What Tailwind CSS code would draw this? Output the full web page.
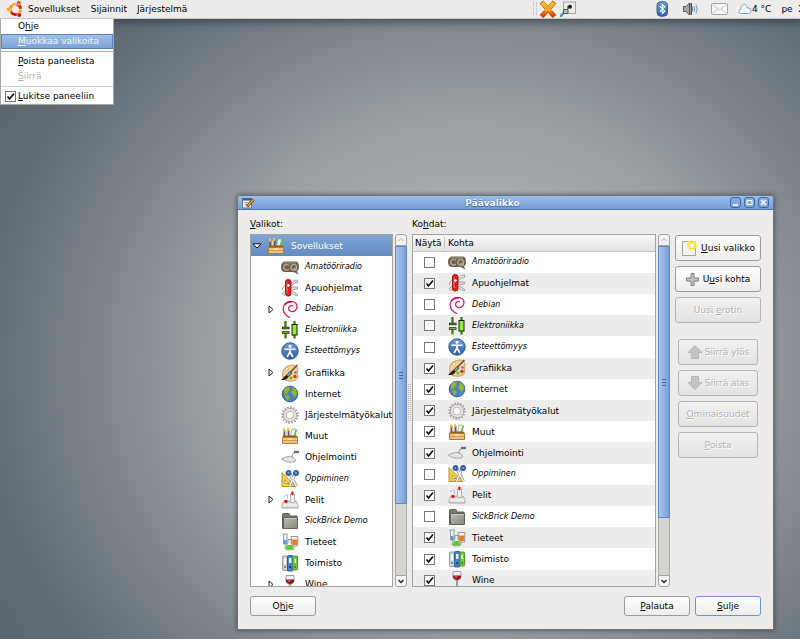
<!DOCTYPE html>
<html lang="fi">
<head>
<meta charset="utf-8">
<title>Päävalikko</title>
<script src="https://cdn.jsdelivr.net/npm/@tailwindcss/browser@4"></script>
</head>
<body class="relative h-screen overflow-hidden bg-[#858d93] bg-[radial-gradient(ellipse_75%_88%_at_59%_57%,#b4b7b9_0%,#a5aaad_32%,#979da1_46%,#80888e_61%,#606b74_82%,#56616a_100%)] font-['DejaVu_Sans',sans-serif] text-[9px] leading-3 text-black">

<!-- icon set -->
<svg class="absolute size-0" aria-hidden="true">
  <defs>
    <linearGradient id="gBlue" x1="0" y1="0" x2="0" y2="1"><stop offset="0" stop-color="#6f9fd8"/><stop offset="1" stop-color="#2c5fa6"/></linearGradient>
    <linearGradient id="gFolder" x1="0" y1="0" x2="1" y2="1"><stop offset="0" stop-color="#b9bcae"/><stop offset="1" stop-color="#85897b"/></linearGradient>
    <linearGradient id="gX" x1="0" y1="0" x2="0" y2="1"><stop offset="0" stop-color="#f9c21b"/><stop offset=".5" stop-color="#f99a1c"/><stop offset="1" stop-color="#e63a0c"/></linearGradient>
  </defs>
  <symbol id="box" viewBox="0 0 18 18">
    <path d="M3.500 3v6M7.500 3v6" stroke="#6b4c86" stroke-width="2"/><path d="M5.500 3.500v6" stroke="#e8dfb0" stroke-width="2"/><path d="M3 1.500v3M7 1v3" stroke="#ecc927" stroke-width="2"/>
    <path d="M9.500 9l1.500-7h3.500l-1 7z" fill="#f2f6f1" stroke="#94ab90" stroke-width=".8"/><path d="M13.500 9l2-6.500" stroke="#67c046" stroke-width="1.600"/>
    <path d="M2.500 8.500h13l1.500 2H1z" fill="#94611f"/><path d="M1.500 10.500h15v6h-15z" fill="#efc183" stroke="#b27c35"/><path d="M2 13.500h14" stroke="#c79350" stroke-width=".8"/><path d="M7 12h4" stroke="#fff3dc"/>
  </symbol>
  <symbol id="cq" viewBox="0 0 18 18">
    <path d="M4 3.500h10c3 0 4 2 4 5 0 2-.5 4-2 5l1.500 3-5-2.500H4c-2.500 0-4-2-4-5s1.500-5.500 4-5.500z" fill="#6e604e"/><path d="M2.500 4.800h12.500" stroke="#a19481" stroke-width="1"/>
    <path d="M7.800 7.500A2.800 2.800 0 1 0 7.800 10.800" fill="none" stroke="#b5a998" stroke-width="1.400"/><circle cx="12.700" cy="9.200" r="2.800" fill="none" stroke="#b5a998" stroke-width="1.400"/><path d="M12.700 10l3 2.500" stroke="#b5a998" stroke-width="1.300"/>
  </symbol>
  <symbol id="knife" viewBox="0 0 18 18">
    <path d="M10 4.500c2-2.500 4-3.500 6.500-3.500v2.500c-2.500 0-4 1-5 3M10.500 8h6v2l-5 .5M11 11.500l6 4.500-1 1-5-2.500M5 6C3 6 2 8 1 11M5 11l-4 3.500 2 2 3-2.500" fill="#e6e7e5" stroke="#9a9c98" stroke-width=".9"/>
    <rect x="4.500" y=".5" width="5.500" height="16.500" rx="2.500" fill="#dd2020" stroke="#a81414"/><path d="M6 3.500v10.500" stroke="#f0827a" stroke-width="1"/><path d="M7.500 5v3M6 6.500h3" stroke="#fff" stroke-width="1.200"/>
  </symbol>
  <symbol id="debian" viewBox="0 0 18 18">
    <path d="M8.500 17.500C4.500 15.500 2 12 2.200 8.200 2.500 4.200 6 1.300 10 1.300c3.600 0 6.200 2.400 6 5.500-.2 3.100-2.700 5.200-5.400 4.700C8.300 11 7.200 9.500 7.700 7.700 8.200 6 9.800 5.200 11.500 5.800" fill="none" stroke="#cb2460" stroke-width="1.300" stroke-linecap="round"/><path d="M3.500 5C5 3 7.500 1.700 11 1.800" fill="none" stroke="#c80f50" stroke-width="1.600"/>
  </symbol>
  <symbol id="electro" viewBox="0 0 18 18">
    <path d="M4.500 0v17.500M13.500 0v17.500" stroke="#4a8020" stroke-width="2.400"/><rect x="1" y="6" width="7.500" height="7" fill="#fff"/><path d="M1 7h7.500M1 11.500h7.500" stroke="#151b10" stroke-width="2.400"/><path d="M1.800 7h6M1.800 11.500h6" stroke="#77b53a" stroke-width="1"/><rect x="11" y="3.500" width="5" height="10.500" fill="#8df032" stroke="#142008"/>
  </symbol>
  <symbol id="access" viewBox="0 0 18 18">
    <circle cx="9" cy="9" r="8.200" fill="url(#gBlue)" stroke="#2a558f"/><circle cx="9" cy="4.300" r="1.500" fill="#fff"/><path d="M4 7.200h10M9 7v4M9 10l-2.600 4.500M9 10l2.600 4.500" stroke="#fff" stroke-width="1.600" stroke-linecap="round"/>
  </symbol>
  <symbol id="palette" viewBox="0 0 18 18">
    <path d="M9 1.500c4-1.500 8 .5 8 4.500 0 2-1 3-.5 5s.5 3.500-1.500 5-7 1.500-10 .5S1 12 2 7.500s4-5 7-6z" fill="#f2d19a" stroke="#b98a48" stroke-width=".8"/><circle cx="6" cy="5" r="1.600" fill="#fff6de" stroke="#c39a58" stroke-width=".6"/><circle cx="14.500" cy="8.500" r="1.300" fill="#4a7fd0"/><circle cx="14" cy="12.500" r="1.700" fill="#de2c1c"/><circle cx="10" cy="14" r="1.500" fill="#4ec22d"/>
    <path d="M16.500 1L7.500 10" stroke="#7d532b" stroke-width="1.700"/><path d="M9 7.500L5.500 11 7.500 13 11 9z" fill="#8b8f8f" stroke="#333" stroke-width=".7"/><path d="M5.500 11C3 12 3 14 0 15.500c3 1.500 6 0 7.500-2.500z" fill="#222"/>
  </symbol>
  <symbol id="globe" viewBox="0 0 18 18">
    <circle cx="9" cy="9" r="7.800" fill="#4b80c4" stroke="#3a6394"/><path d="M3 4.500C5 2 8 1.500 9 2l-1 2 1 1.500-2.500 1L6.500 9 3 8zM11 2.500c3 .5 5 3 5.300 5.500L15 10l-1.500 2.500-1.500-3L10 8l1.500-3zM3.500 9.500l5 1.500L8 14l-1.500 1.500L4.500 12z" fill="#93b640" stroke="#7aa036" stroke-width=".5"/>
  </symbol>
  <symbol id="gear" viewBox="0 0 18 18">
    <circle cx="9" cy="9" r="7.900" fill="none" stroke="#9a9494" stroke-width="1.500" stroke-dasharray="1.600 1.500"/><circle cx="9" cy="9" r="6.600" fill="#eae6e6" stroke="#a39d9d" stroke-width=".9"/><circle cx="9" cy="9" r="3.900" fill="#fff" stroke="#c2a6a6" stroke-width=".9"/>
  </symbol>
  <symbol id="trowel" viewBox="0 0 18 18">
    <path d="M.5 11c3-1.800 7-2.800 9-2.600l2.500.6 3 3.500c-2 2.500-10 2.500-14.500-1.500z" fill="#e4e5e2" stroke="#9a9c98" stroke-width=".9"/><path d="M11 9.500c0-3 .5-4.500 3-5" fill="none" stroke="#9a9c98" stroke-width="1.100"/><path d="M13 4h5" stroke="#6b6d69" stroke-width="2.400"/>
  </symbol>
  <symbol id="edu" viewBox="0 0 18 18">
    <path d="M1 2.500v14h14z" fill="#f0cf4a" stroke="#b38c1a" stroke-width=".9"/><path d="M4 10v3.500h4z" fill="#fff" stroke="#b38c1a" stroke-width=".8"/><path d="M14 4L8.500 16.500M9 4l6.500 12.500" stroke="#8a8c8e" stroke-width="2.800"/><path d="M14 4L8.500 16.500M9 4l6.500 12.500" stroke="#f2f2f2" stroke-width="1.600"/><circle cx="7.500" cy="3" r="2" fill="#7ea3d3" stroke="#2f5f9f" stroke-width="1.900"/><circle cx="15" cy="3" r="2" fill="#7ea3d3" stroke="#2f5f9f" stroke-width="1.900"/>
  </symbol>
  <symbol id="joy" viewBox="0 0 18 18">
    <path d="M3 10h12l2 4v3H1v-3z" fill="#e2e3e1" stroke="#9b9c9a" stroke-width=".9"/><path d="M1.500 14h15" stroke="#fafafa"/><path d="M9.500 3h4v8.500h-4z" fill="#f0f0f0" stroke="#a5a5a5" stroke-width=".8"/><rect x="10.300" y=".5" width="2.200" height="3.700" rx="1" fill="#d41a1a"/><circle cx="5" cy="10.500" r="1.700" fill="#d41a1a"/><path d="M2 6l4.500-2.500V8" fill="none" stroke="#c4c4c4"/>
  </symbol>
  <symbol id="folder" viewBox="0 0 18 18">
    <path d="M1.500 2.500q0-1 1-1h5q1 0 1 1V4h7.500v12.500h-14.500z" fill="#777b6d" stroke="#5c6054"/><rect x="2.500" y="5.500" width="14" height="11" rx=".5" fill="url(#gFolder)" stroke="#5f6357"/><path d="M3.500 6.500h12" stroke="#cfd1c6"/>
  </symbol>
  <symbol id="lab" viewBox="0 0 18 18">
    <path d="M1.500 1h5l-.5 1v9q-1.500 2-3.500 0V2z" fill="#e9eff4" stroke="#8b959b" stroke-width=".9"/><path d="M3 7h2.500v4H3z" fill="#5f94d6"/><path d="M10 3.500h7l-.5 9.500h-5z" fill="#f6f1ec" stroke="#8f8c88" stroke-width=".9"/><path d="M11 6.500h5.500l-.5 5.500h-4.500z" fill="#ef7a22"/><path d="M7 6.500h3V10l3 4q.5 2.800-2 2.800H6q-2.500 0-2-2.800l3-4z" fill="#f2f6f2" stroke="#859285" stroke-width=".9"/><path d="M6.300 12h4.400l1.500 3q0 1.400-2 1.400H6.800q-2 0-2-1.400z" fill="#5dc92f"/>
  </symbol>
  <symbol id="office" viewBox="0 0 18 18">
    <rect x="1.500" y="2" width="5" height="14.500" rx="1" fill="#d3d5d2" stroke="#999b98"/><path d="M3 5h2v5H3z" fill="#fff"/><rect x="6.500" y="1.500" width="5.500" height="15.500" rx="1" fill="#4a80c5" stroke="#2b5a98"/><path d="M8 4h2.500v5H8z" fill="#e6eef8"/><rect x="12" y="2" width="4.500" height="14" rx="1" fill="#6fc93b" stroke="#4c9a26"/><path d="M13.500 5H15v4h-1.500z" fill="#f0faea"/><circle cx="9.200" cy="13" r="1" fill="#102a50"/><circle cx="4" cy="13" r="1" fill="#666"/><circle cx="14.200" cy="13" r=".8" fill="#24510f"/>
  </symbol>
  <symbol id="wine" viewBox="0 0 18 18">
    <path d="M5.500.5h7c1 3 1.500 8-3.500 9-5-1-4.500-6-3.500-9z" fill="#edeff2" stroke="#8d9097" stroke-width=".9"/><path d="M5 4.500h8c.3 2.500-1 4.300-4 4.500-3-.2-4.300-2-4-4.500z" fill="#8e0f1c"/><path d="M6.500 5h3v2h-3z" fill="#d44a50"/><path d="M9 9.500V16" stroke="#7b7e86" stroke-width="1.500"/><ellipse cx="9" cy="16.500" rx="3.500" ry="1" fill="#b5b8be"/>
  </symbol>
</svg>

<!-- desktop panel -->
<header class="flex h-[19px] items-center overflow-hidden border-b border-[#c9c7c3] bg-[#edecea] whitespace-nowrap shadow-[0_1px_8px_2px_rgba(30,40,50,0.6)]">
  <nav class="flex items-center pl-[6px]">
    <svg class="mr-1 size-[18px]" viewBox="0 0 18 18" aria-hidden="true">
      <circle cx="9.500" cy="9.300" r="5.200" fill="none" stroke="#fff" stroke-width="4"/>
      <g fill="none" stroke-width="3"><path d="M5.300 6.200A5.200 5.200 0 0 1 9.800 4.100" stroke="#f3b02c"/><path d="M5.300 6.200A5.200 5.200 0 0 0 5.300 12.400" stroke="#e8741a"/><path d="M5.300 12.400a5.200 5.200 0 0 0 6.200 1.700" stroke="#cf201a"/><path d="M14.600 9.600a5.200 5.200 0 0 1-3.100 4.500" stroke="#f0a01c"/><path d="M10.500 4.200a5.200 5.200 0 0 1 4.200 4.600" stroke="#c9300f"/></g>
      <circle cx="12.800" cy="2.800" r="2.300" fill="#dd5a18" stroke="#fff" stroke-width=".6"/><circle cx="2.700" cy="9.200" r="2.300" fill="#f0a81e" stroke="#fff" stroke-width=".6"/><circle cx="13.200" cy="15" r="2.300" fill="#b3161a" stroke="#fff" stroke-width=".6"/>
    </svg>
    <a href="#" class="mr-[11px]">Sovellukset</a><a href="#" class="mr-[10px]">Sijainnit</a><a href="#">Järjestelmä</a>
  </nav>
  <div class="ml-auto flex w-[267px] shrink-0 items-center">
    <svg class="mr-[2px] h-[14px] w-1 shrink-0" viewBox="0 0 4 14" aria-hidden="true"><path d="M.5 0v14M3.500 0v14" stroke="#b3b1ae" stroke-dasharray="1 1"/></svg>
    <svg class="mr-[3px] size-[18px] shrink-0" viewBox="0 0 18 18" role="img" aria-label="Xchat"><path d="M2.500 2l13 14.500M15.500 2l-13 14.500" stroke="#a4560e" stroke-width="4.800"/><path d="M3 2.500l12 13.500M15 2.500L3 16" stroke="url(#gX)" stroke-width="3.800"/><path d="M3 10h12" stroke="#fbe3c0" stroke-width="1.500" stroke-dasharray="2 1" opacity=".6"/></svg>
    <svg class="mr-[80px] size-4 shrink-0" viewBox="0 0 16 16" role="img" aria-label="Pistoke"><rect x="3.500" y="1" width="12" height="11.500" fill="#ebebe8" stroke="#a4a4a0"/><path d="M7 5h2v3H7z" fill="#777"/><circle cx="10" cy="5.800" r="2" fill="#1b1b1b"/><path d="M0 16l4-4.500" stroke="#5b8bc9" stroke-width="2.600"/><path d="M3.500 8.500H8v4H3.500z" fill="#b9bab6" stroke="#555"/></svg>
    <svg class="mr-[14px] h-4 w-[13px] shrink-0" viewBox="0 0 13 16" role="img" aria-label="Bluetooth"><rect x="1" y=".8" width="10.500" height="14.500" rx="4" fill="url(#gBlue)" stroke="#2f5b9c"/><path d="M3.800 5.200l5 5L6.300 12.500v-9l2.500 2.300-5 5" fill="none" stroke="#fff" stroke-width="1.100"/></svg>
    <svg class="mr-3 size-4 shrink-0" viewBox="0 0 16 16" role="img" aria-label="Äänenvoimakkuus"><path d="M.5 5.500H3l3.500-3.500v12L3 10.500H.5z" fill="#a5a7a3" stroke="#555753"/><path d="M8 2q2.500 6 0 12z" fill="#888a85" stroke="#444"/><path d="M11 5q1.300 3 0 6M13 3.500q2.500 4.500 0 9" fill="none" stroke="#6c98d0"/></svg>
    <svg class="mr-[10px] h-3 w-[17px] shrink-0" viewBox="0 0 17 12" role="img" aria-label="Posti"><rect x=".5" y=".5" width="16" height="11" rx="1" fill="#f7f7f6" stroke="#a3a39f"/><path d="M1.500 1.500L8.500 7l7-5.500M1.500 10.500L6.500 6M15.500 10.500l-5-4.500" fill="none" stroke="#c2c2be"/></svg>
    <svg class="h-3 w-[14px] shrink-0" viewBox="0 0 14 12" role="img" aria-label="Pilvistä"><path d="M3 10.500C0 10.500 0 7 2.800 6.500 2.500 3 4.500 1 6.500 1.300 8.500 1.500 9.300 3.500 9.300 5c2.500-.5 4 1.500 3.700 3.500-.2 1.300-1.200 2-2.500 2z" fill="#f1f6fd" stroke="#7ba4da"/></svg>
    <span class="mr-[10px]">4 °C</span><span>pe&nbsp; 2</span>
  </div>
</header>

<!-- panel context menu -->
<div role="menu" class="absolute top-[19px] left-0 flex w-[114px] flex-col border border-t-0 border-[#a7a7a5] bg-white leading-[15px]">
  <button role="menuitem" class="h-[15px] pl-[17px] text-left">O<u>h</u>je</button>
  <button role="menuitem" class="h-[15px] border border-[#5b84bd] bg-linear-to-b from-[#a1bfe7] to-[#7ba2d6] pl-4 text-left leading-[13px] text-[#eef4fc]"><u>M</u>uokkaa valikoita</button>
  <div class="mt-[2px] mb-[2px] h-px bg-[#b5b5b3]"></div>
  <button role="menuitem" class="h-[15px] pl-[17px] text-left"><u>P</u>oista paneelista</button>
  <button role="menuitem" disabled class="h-[15px] pl-[17px] text-left text-[#b3b2b0]"><u>S</u>iirrä</button>
  <div class="mt-[2px] mb-[2px] h-px bg-[#cfcfcd]"></div>
  <label class="flex h-[15px] items-center pl-1">
    <span class="mr-[2px] grid size-[11px]"><input type="checkbox" checked class="peer col-start-1 row-start-1 size-[11px] appearance-none border border-[#777] bg-white"><svg class="pointer-events-none col-start-1 row-start-1 hidden size-[11px] peer-checked:block" viewBox="0 0 11 11"><path d="M2.500 5.500L4.500 8 9 2.500" fill="none" stroke="#111" stroke-width="1.700"/></svg></span><span><u>L</u>ukitse paneeliin</span>
  </label>
</div>

<!-- menu editor window -->
<section aria-label="Päävalikko" class="absolute top-[195px] right-[26px] bottom-[9px] left-[237px] flex flex-col rounded-t-[4px] border border-[#6f7276] bg-[#edecea] shadow-[0_0_4px_1px_rgba(40,45,50,0.5)]">
  <div class="flex h-[14px] shrink-0 items-center rounded-t-[3px] border-b border-[#4f76ac] bg-linear-to-b from-[#9cbde8] to-[#769fd4] px-1">
    <svg class="h-3 w-[13px]" viewBox="0 0 13 12" aria-hidden="true"><rect x=".5" y="1.500" width="9" height="9.500" fill="#e9edf2" stroke="#5d7699"/><path d="M1 2.500h8.500" stroke="#3b5a86" stroke-width="2"/><path d="M2.500 5.500h4M2.500 7.500h3" stroke="#8aa"/><path d="M5 9.500L11.500 2.500" stroke="#5a4010" stroke-width="3"/><path d="M5.500 9L11.500 2.500" stroke="#e6a532" stroke-width="1.700"/></svg>
    <h1 class="flex-1 text-center font-bold text-white [text-shadow:0_0_1px_#3c6098,0_1px_1px_#3c6098]">Päävalikko</h1>
    <div class="flex gap-[3px]">
      <button aria-label="Pienennä" class="size-[11px] rounded-[3px] border border-[#3d68a3] bg-[#84a9dc]"><svg viewBox="0 0 9 9" class="size-[9px]"><path d="M2 7h5" stroke="#fff" stroke-width="1.500"/></svg></button>
      <button aria-label="Suurenna" class="size-[11px] rounded-[3px] border border-[#3d68a3] bg-[#84a9dc]"><svg viewBox="0 0 9 9" class="size-[9px]"><path d="M2 2.500h5v4H2z" fill="none" stroke="#fff"/></svg></button>
      <button aria-label="Sulje ikkuna" class="size-[11px] rounded-[3px] border border-[#3d68a3] bg-[#84a9dc]"><svg viewBox="0 0 9 9" class="size-[9px]"><path d="M2 2l5 5M7 2L2 7" stroke="#fff" stroke-width="1.500"/></svg></button>
    </div>
  </div>

  <div class="flex min-h-0 flex-1 px-3 pt-2">
    <div class="flex w-[157px] shrink-0 flex-col">
      <h2 id="menus" class="mb-1"><u>V</u>alikot:</h2>
      <div class="flex min-h-0 flex-1 gap-[2px]">
        <div class="min-w-0 flex-1 overflow-hidden border border-[#a3a29f] bg-white">
          <ul id="tree" role="tree" aria-labelledby="menus" class="grid h-[360px] auto-rows-fr whitespace-nowrap"></ul>
        </div>
        <div class="flex w-3 flex-col">
          <button aria-label="Vieritä ylös" class="grid h-3 place-items-center rounded-t-[3px] border border-[#a3a29f] bg-[#f3f2f1]"><svg class="size-[6px]" viewBox="0 0 6 6"><path d="M.5 4L3 1.500 5.500 4" fill="none" stroke="#aaa"/></svg></button>
          <div class="grid h-[258px] place-items-center border border-[#5c89c6] bg-linear-to-r from-[#a8c5ec] to-[#789fd6]"><span class="h-[7px] w-1 border-y border-[#41689e] bg-[linear-gradient(transparent_2px,#41689e_2px,#41689e_3px,transparent_3px)]"></span></div>
          <div class="flex-1 border-x border-[#aaa9a6] bg-[#d5d4d1]"></div>
          <button aria-label="Vieritä alas" class="grid h-3 place-items-center rounded-b-[3px] border border-[#a3a29f] bg-[#f6f6f5]"><svg class="size-[6px]" viewBox="0 0 6 6"><path d="M.5 2L3 4.500 5.500 2" fill="none" stroke="#222" stroke-width="1.300"/></svg></button>
        </div>
      </div>
    </div>

    <div role="separator" class="flex w-[5px] shrink-0 items-center justify-center">
      <svg class="h-[37px] w-[3px]" viewBox="0 0 3 37" aria-hidden="true"><path d="M.5 0v37M2.500 0v37" stroke="#b3b1ae" stroke-dasharray="1 1"/></svg>
    </div>

    <div class="flex min-w-0 flex-1 flex-col">
      <h2 id="entries" class="mb-1">Ko<u>h</u>dat:</h2>
      <div class="flex min-h-0 flex-1 gap-[2px]">
        <div class="min-w-0 flex-1 overflow-hidden border border-[#a3a29f] bg-white">
          <table aria-labelledby="entries" class="h-[356px] w-full table-fixed border-collapse whitespace-nowrap">
            <thead>
              <tr class="h-4 bg-linear-to-b from-[#f8f8f7] to-[#e4e3e1] text-left">
                <th class="w-8 border-b border-[#c4c3c0] p-0 pl-[2px] font-normal"><span class="block border-r border-[#c4c3c0]">Näytä</span></th>
                <th class="border-b border-[#c4c3c0] p-0 pl-[3px] font-normal">Kohta</th>
              </tr>
            </thead>
            <tbody id="rows"></tbody>
          </table>
        </div>
        <div class="flex w-3 flex-col">
          <button aria-label="Vieritä ylös" class="grid h-3 place-items-center rounded-t-[3px] border border-[#a3a29f] bg-[#f3f2f1]"><svg class="size-[6px]" viewBox="0 0 6 6"><path d="M.5 4L3 1.500 5.500 4" fill="none" stroke="#aaa"/></svg></button>
          <div class="grid h-[272px] place-items-center border border-[#5c89c6] bg-linear-to-r from-[#a8c5ec] to-[#789fd6]"><span class="h-[7px] w-1 border-y border-[#41689e] bg-[linear-gradient(transparent_2px,#41689e_2px,#41689e_3px,transparent_3px)]"></span></div>
          <div class="flex-1 border-x border-[#aaa9a6] bg-[#d5d4d1]"></div>
          <button aria-label="Vieritä alas" class="grid h-3 place-items-center rounded-b-[3px] border border-[#a3a29f] bg-[#f6f6f5]"><svg class="size-[6px]" viewBox="0 0 6 6"><path d="M.5 2L3 4.500 5.500 2" fill="none" stroke="#222" stroke-width="1.300"/></svg></button>
        </div>
      </div>
    </div>

    <div class="ml-[5px] flex w-[86px] shrink-0 flex-col gap-[5px] pt-[17px]">
      <button class="flex h-[26px] items-center justify-center gap-1 rounded-[3px] border border-[#9c9b98] bg-linear-to-b from-white to-[#eeedeb]"><svg class="size-4" viewBox="0 0 16 16"><path d="M1.500 1.500h13v14h-13z" fill="#f3f3f1" stroke="#a5a5a1"/><circle cx="11" cy="5.300" r="5" fill="#fdf04a" opacity=".8"/><path d="M11 1.300l1.200 2.600 2.800.4-2 2 .5 2.800L11 7.800 8.500 9.100l.5-2.800-2-2 2.800-.4z" fill="#fff" stroke="#eedc1a" stroke-width=".8"/></svg><span><u>U</u>usi valikko</span></button>
      <button class="flex h-[26px] items-center justify-center gap-1 rounded-[3px] border border-[#9c9b98] bg-linear-to-b from-white to-[#eeedeb]"><svg class="size-[13px]" viewBox="0 0 13 13"><path d="M5 .5h3V5h4.500v3H8v4.500H5V8H.5V5H5z" fill="#c3c4c1" stroke="#7e807c"/></svg><span>U<u>u</u>si kohta</span></button>
      <button disabled class="h-[26px] rounded-[3px] border border-[#b5b4b1] bg-linear-to-b from-[#f2f1f0] to-[#e4e3e1] text-[#b3b2b0] [text-shadow:1px_1px_0_#fff]">Uusi <u>e</u>rotin</button>
      <div class="mt-[11px] flex flex-col gap-[5px] px-[3px]">
        <button disabled class="flex h-[26px] items-center justify-center gap-[2px] rounded-[3px] border border-[#b5b4b1] bg-linear-to-b from-[#f2f1f0] to-[#e4e3e1] text-[#b3b2b0] [text-shadow:1px_1px_0_#fff]"><svg class="size-4" viewBox="0 0 16 16"><path d="M8 1.500l7 7h-3.500v6h-7v-6H1z" fill="#c3c5c4" stroke="#b6b8b7"/></svg><span>Siirrä ylös</span></button>
        <button disabled class="flex h-[26px] items-center justify-center gap-[2px] rounded-[3px] border border-[#b5b4b1] bg-linear-to-b from-[#f2f1f0] to-[#e4e3e1] text-[#b3b2b0] [text-shadow:1px_1px_0_#fff]"><svg class="size-4" viewBox="0 0 16 16"><path d="M8 14.500l7-7h-3.500v-6h-7v6H1z" fill="#c3c5c4" stroke="#b6b8b7"/></svg><span>Siirrä alas</span></button>
        <button disabled class="h-[26px] rounded-[3px] border border-[#b5b4b1] bg-linear-to-b from-[#f2f1f0] to-[#e4e3e1] text-[#b3b2b0] [text-shadow:1px_1px_0_#fff]"><u>O</u>minaisuudet</button>
        <button disabled class="h-[26px] rounded-[3px] border border-[#b5b4b1] bg-linear-to-b from-[#f2f1f0] to-[#e4e3e1] text-[#b3b2b0] [text-shadow:1px_1px_0_#fff]"><u>P</u>oista</button>
      </div>
    </div>
  </div>

  <div class="flex shrink-0 gap-[5px] px-3 pt-[9px] pb-[13px]">
    <button class="mr-auto h-5 w-[66px] rounded-[3px] border border-[#9c9b98] bg-linear-to-b from-white to-[#eeedeb]">O<u>h</u>je</button>
    <button class="h-5 w-[66px] rounded-[3px] border border-[#9c9b98] bg-linear-to-b from-white to-[#eeedeb]"><u>P</u>alauta</button>
    <button class="h-5 w-[66px] rounded-[3px] border border-[#6d95cb] bg-linear-to-b from-white to-[#eeedeb]"><u>S</u>ulje</button>
  </div>
</section>

<script>
  // name, icon, visible in menu, has children
  const entries = [
    ['Amatööriradio', 'cq', 0, 0], ['Apuohjelmat', 'knife', 1, 0], ['Debian', 'debian', 0, 1],
    ['Elektroniikka', 'electro', 0, 0], ['Esteettömyys', 'access', 0, 0], ['Grafiikka', 'palette', 1, 1],
    ['Internet', 'globe', 1, 0], ['Järjestelmätyökalut', 'gear', 1, 0], ['Muut', 'box', 1, 0],
    ['Ohjelmointi', 'trowel', 1, 0], ['Oppiminen', 'edu', 0, 0], ['Pelit', 'joy', 1, 1],
    ['SickBrick Demo', 'folder', 0, 0], ['Tieteet', 'lab', 1, 0], ['Toimisto', 'office', 1, 0], ['Wine', 'wine', 1, 1]
  ];
  const label = (name, on) => on ? `<span>${name}</span>` : `<span class="text-[8px] italic">${name}</span>`;

  document.getElementById('tree').innerHTML =
    `<li role="treeitem" aria-expanded="true" class="flex items-center bg-linear-to-b from-[#7fa4d5] to-[#628bc2] pl-px text-white">
      <svg class="mr-[5px] h-[6px] w-[10px]" viewBox="0 0 10 6"><path d="M1 .8h8L5 5z" fill="#fff" stroke="#111"/></svg>
      <svg class="mr-[6px] size-[18px]"><use href="#box"/></svg><span>Sovellukset</span></li>` +
    entries.map(([name, icon, on, kids]) =>
      `<li role="treeitem" class="flex items-center pl-4">
        <span class="w-[14px]">${kids ? '<svg class="ml-px h-[9px] w-[6px]" viewBox="0 0 6 9"><path d="M1 1v7l4-3.500z" fill="#fff" stroke="#222"/></svg>' : ''}</span>
        <svg class="mr-[6px] size-[18px]"><use href="#${icon}"/></svg>${label(name, on)}</li>`).join('');

  document.getElementById('rows').innerHTML = entries.map(([name, icon, on]) =>
    `<tr class="even:bg-[#ededed]">
      <td class="p-0"><span class="mx-auto grid size-[11px]"><input type="checkbox" aria-label="${name}" ${on ? 'checked' : ''} class="peer col-start-1 row-start-1 size-[11px] appearance-none border border-[#777] bg-white"><svg class="pointer-events-none col-start-1 row-start-1 hidden size-[11px] peer-checked:block" viewBox="0 0 11 11"><path d="M2.500 5.500L4.500 8 9 2.500" fill="none" stroke="#111" stroke-width="1.700"/></svg></span></td>
      <td class="p-0 pl-[3px]"><span class="flex items-center"><svg class="mr-[6px] size-[18px]"><use href="#${icon}"/></svg>${label(name, on)}</span></td>
    </tr>`).join('');
</script>
</body>
</html>
